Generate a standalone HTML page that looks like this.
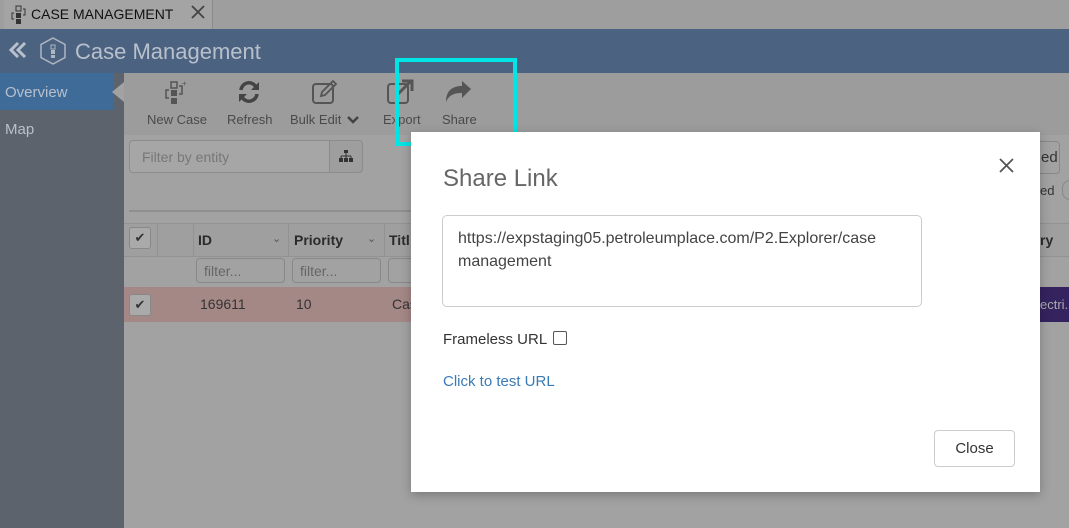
<!DOCTYPE html>
<html><head><style>
*{box-sizing:border-box;margin:0;padding:0}
body{width:1069px;height:528px;overflow:hidden;position:relative;font-family:"Liberation Sans","DejaVu Sans",sans-serif;background:#a2a2a2}
.abs{position:absolute}
</style></head><body>
<div class="abs" style="left:0;top:0;width:1069px;height:29px;background:#9e9e9e"></div>
<div class="abs" style="left:4px;top:0;width:209px;height:29px;background:#a4a4a4;border-right:1px solid #8a8a8a"></div>
<svg class="abs" style="left:10px;top:5px" width="18" height="20" viewBox="0 0 18 20"><rect x="6" y="1" width="5" height="5" fill="none" stroke="#333"/><rect x="6" y="8" width="5" height="5" fill="#333"/><rect x="6" y="14" width="5" height="5" fill="#333"/><path d="M4 8H2V14H4M13 4H15V10H13" fill="none" stroke="#333"/></svg>
<div class="abs" style="left:31px;top:6px;font-size:14px;color:#111">CASE MANAGEMENT</div>
<svg class="abs" style="left:191px;top:5px" width="14" height="14" viewBox="0 0 14 14"><path d="M1 1L13 13M13 1L1 13" stroke="#444" stroke-width="1.8"/></svg>
<div class="abs" style="left:0;top:29px;width:1069px;height:44px;background:#4b6280"></div>
<svg class="abs" style="left:9px;top:42px" width="18" height="16" viewBox="0 0 18 16"><path d="M9 1L2 8L9 15M16 1L9 8L16 15" fill="none" stroke="#b8c0cc" stroke-width="3"/></svg>
<svg class="abs" style="left:38px;top:36px" width="30" height="30" viewBox="0 0 30 30"><path d="M15 2L27 8.5V21.5L15 28L3 21.5V8.5Z" fill="none" stroke="#aeb6c2" stroke-width="1.5"/><rect x="13" y="9" width="4" height="4" fill="none" stroke="#aeb6c2"/><rect x="13" y="14" width="4" height="4" fill="#aeb6c2"/><rect x="13" y="19" width="4" height="3" fill="#aeb6c2"/></svg>
<div class="abs" style="left:75px;top:39px;font-size:22px;color:#b8c0cc">Case Management</div>
<div class="abs" style="left:0;top:73px;width:124px;height:455px;background:#5d636d"></div>
<div class="abs" style="left:0;top:73px;width:114px;height:37px;background:#3f6b98"></div>
<div class="abs" style="left:112px;top:82px;width:0;height:0;border-top:10px solid transparent;border-bottom:10px solid transparent;border-right:12px solid #a2a2a2"></div>
<div class="abs" style="left:5px;top:84px;font-size:15px;color:#b7c0cc">Overview</div>
<div class="abs" style="left:5px;top:121px;font-size:15px;color:#b7c0cc">Map</div>
<div class="abs" style="left:124px;top:73px;width:945px;height:62px;background:#9c9c9c"></div>
<div class="abs" style="left:147px;top:112px;font-size:13px;color:#4a4a4a">New Case</div>
<div class="abs" style="left:227px;top:112px;font-size:13px;color:#4a4a4a">Refresh</div>
<div class="abs" style="left:290px;top:112px;font-size:13px;color:#4a4a4a">Bulk Edit</div>
<svg class="abs" style="left:347px;top:116px" width="12" height="9" viewBox="0 0 12 9"><path d="M1 1L6 6L11 1" fill="none" stroke="#444" stroke-width="2.5"/></svg>
<div class="abs" style="left:383px;top:112px;font-size:13px;color:#4a4a4a">Export</div>
<div class="abs" style="left:442px;top:112px;font-size:13px;color:#4a4a4a">Share</div>
<svg class="abs" style="left:162px;top:80px" width="26" height="26" viewBox="0 0 26 26"><rect x="9" y="2" width="6" height="6" fill="none" stroke="#555" stroke-width="1.5"/><rect x="9" y="10" width="6" height="6" fill="#555"/><rect x="9" y="18" width="6" height="6" fill="#555"/><path d="M7 10H4V18H7M17 6H20V14H17" fill="none" stroke="#555" stroke-width="1.5"/><text x="20" y="6" font-size="8" fill="#555">+</text></svg>
<svg class="abs" style="left:237px;top:80px" width="24" height="24" viewBox="0 0 24 24"><path d="M4 10A8 8 0 0 1 19 7M20 14A8 8 0 0 1 5 17" fill="none" stroke="#444" stroke-width="3.5"/><path d="M22 2V10H14Z M2 22V14H10Z" fill="#444"/></svg>
<svg class="abs" style="left:311px;top:79px" width="28" height="26" viewBox="0 0 28 26"><rect x="2" y="5" width="20" height="19" rx="3" fill="none" stroke="#555" stroke-width="2"/><path d="M10 17L11 13L22 2L25 5L14 16Z" fill="none" stroke="#555" stroke-width="1.8"/></svg>
<svg class="abs" style="left:386px;top:79px" width="28" height="26" viewBox="0 0 28 26"><rect x="2" y="5" width="20" height="19" rx="3" fill="none" stroke="#555" stroke-width="2"/><path d="M10 17L24 3M16 2H26V12" fill="none" stroke="#555" stroke-width="3"/></svg>
<svg class="abs" style="left:444px;top:81px" width="28" height="22" viewBox="0 0 28 22"><path d="M27 8L18 0V5C8 5 2 10 2 21C5 14 10 12 18 12V17Z" fill="#555"/></svg>
<div class="abs" style="left:129px;top:140px;width:234px;height:33px;background:#a6a6a6;border:1px solid #8c8c8c;border-radius:4px"></div>
<div class="abs" style="left:329px;top:140px;width:34px;height:33px;border:1px solid #8c8c8c;border-radius:0 4px 4px 0;background:#9e9e9e"></div>
<svg class="abs" style="left:339px;top:150px" width="14" height="12" viewBox="0 0 14 12"><rect x="5" y="0" width="4" height="3" fill="#333"/><path d="M7 3V6M2 6H12M2 6V8M7 6V8M12 6V8" stroke="#333"/><rect x="0" y="8" width="4" height="4" fill="#333"/><rect x="5" y="8" width="4" height="4" fill="#333"/><rect x="10" y="8" width="4" height="4" fill="#333"/></svg>
<div class="abs" style="left:142px;top:149px;font-size:14px;color:#777">Filter by entity</div>
<div class="abs" style="left:129px;top:210px;width:300px;height:2px;background:#8f8f8f"></div>
<div class="abs" style="left:124px;top:223px;width:945px;height:34px;background:#9f9f9f;border-top:1px solid #929292;border-bottom:1px solid #929292"></div>
<div class="abs" style="left:157px;top:223px;width:1px;height:34px;background:#929292"></div>
<div class="abs" style="left:193px;top:223px;width:1px;height:34px;background:#929292"></div>
<div class="abs" style="left:288px;top:223px;width:1px;height:34px;background:#929292"></div>
<div class="abs" style="left:384px;top:223px;width:1px;height:34px;background:#929292"></div>
<div class="abs" style="left:129px;top:227px;width:22px;height:22px;border:1px solid #888;border-radius:3px;background:#aaa;font-size:13px;text-align:center;line-height:20px;color:#333">✔</div>
<div class="abs" style="left:198px;top:232px;font-size:14px;font-weight:bold;color:#2a2a2a">ID</div>
<div class="abs" style="left:272px;top:232px;font-size:11px;color:#555">⌄</div>
<div class="abs" style="left:294px;top:232px;font-size:14px;font-weight:bold;color:#2a2a2a">Priority</div>
<div class="abs" style="left:367px;top:232px;font-size:11px;color:#555">⌄</div>
<div class="abs" style="left:389px;top:232px;font-size:14px;font-weight:bold;color:#2a2a2a">Titl</div>
<div class="abs" style="left:196px;top:258px;width:89px;height:25px;border:1px solid #888;border-radius:4px;font-size:14px;color:#666;padding:4px 7px">filter...</div>
<div class="abs" style="left:292px;top:258px;width:89px;height:25px;border:1px solid #888;border-radius:4px;font-size:14px;color:#666;padding:4px 7px">filter...</div>
<div class="abs" style="left:388px;top:258px;width:30px;height:25px;border:1px solid #888;border-radius:4px"></div>
<div class="abs" style="left:124px;top:287px;width:945px;height:35px;background:#a48886"></div>
<div class="abs" style="left:129px;top:294px;width:22px;height:22px;border:1px solid #888;border-radius:3px;background:#aaa;font-size:13px;text-align:center;line-height:20px;color:#333">✔</div>
<div class="abs" style="left:200px;top:296px;font-size:14px;color:#333">169611</div>
<div class="abs" style="left:296px;top:296px;font-size:14px;color:#333">10</div>
<div class="abs" style="left:392px;top:296px;font-size:14px;color:#333">Cas</div>
<div class="abs" style="left:1040px;top:287px;width:29px;height:35px;background:#34235f;color:#aaa;font-size:13px;padding-top:10px">ectri..</div>
<div class="abs" style="left:1040px;top:232px;font-size:14px;font-weight:bold;color:#2a2a2a">ry</div>
<div class="abs" style="left:1030px;top:141px;width:30px;height:33px;border:1px solid #888;border-radius:4px;font-size:15px;color:#333;padding:7px 0 0 10px">ed</div>
<div class="abs" style="left:1040px;top:183px;font-size:13px;color:#333">ed</div>
<div class="abs" style="left:1062px;top:180px;width:16px;height:20px;border:1px solid #888;border-radius:10px"></div>
<div class="abs" style="left:395px;top:58px;width:122px;height:88px;border:4px solid #00e5e5"></div>
<div class="abs" style="left:411px;top:132px;width:629px;height:360px;background:#fff;box-shadow:0 3px 10px rgba(0,0,0,.25)"></div>
<div class="abs" style="left:443px;top:165px;font-size:24px;color:#666">Share Link</div>
<svg class="abs" style="left:999px;top:158px" width="15" height="15" viewBox="0 0 15 15"><path d="M1 1L14 14M14 1L1 14" stroke="#555" stroke-width="1.8"/></svg>
<div class="abs" style="left:442px;top:215px;width:480px;height:92px;border:1px solid #ccc;border-radius:5px;padding:11px 15px;font-size:16px;color:#444;line-height:23px">https://expstaging05.petroleumplace.com/P2.Explorer/case management</div>
<div class="abs" style="left:443px;top:331px;font-size:15px;color:#333">Frameless URL</div>
<div class="abs" style="left:553px;top:331px;width:14px;height:14px;border:1px solid #555;border-radius:2px"></div>
<div class="abs" style="left:443px;top:373px;font-size:15px;color:#3a7ab5">Click to test URL</div>
<div class="abs" style="left:934px;top:430px;width:81px;height:37px;border:1px solid #ccc;border-radius:4px;font-size:15px;color:#333;text-align:center;line-height:35px">Close</div>
</body></html>
